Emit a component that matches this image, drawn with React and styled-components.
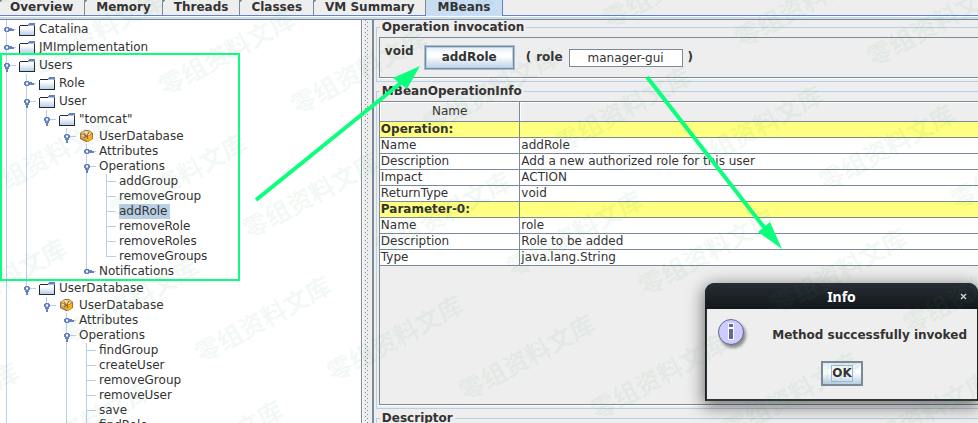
import React from "react";
import styled, { createGlobalStyle, css } from "styled-components";

const LINE = "#7a8a99";
const SOFT = "#b8cfe5";
const BLUE = "#6382bf";
const MARK = "#0bff7d";
const FACE = "#eeeeee";

const GlobalStyle = createGlobalStyle`
  * { box-sizing: border-box; }
  html, body, #root { height: 100%; }
  body {
    margin: 0;
    overflow: hidden;
    background: ${FACE};
    color: #333333;
    font-family: "DejaVu Sans", sans-serif;
    font-size: 12px;
    line-height: 15px;
  }
  button, input { font: inherit; color: inherit; }
`;

const Page = styled.div`
  position: relative;
  display: flex;
  flex-direction: column;
  height: 100vh;
  overflow: hidden;
`;

/* ---------- tab bar ---------- */
const TabBar = styled.nav`
  display: flex;
  flex: none;
  height: 16px;
  border-bottom: 1px solid ${BLUE};
`;

const Tab = styled.button`
  flex: none;
  height: ${({ $selected }) => ($selected ? 16 : 15)}px;
  padding: 0 11px ${({ $selected }) => ($selected ? 2 : 1)}px 10px;
  border: 0;
  border-right: 1px solid ${({ $selected }) => ($selected ? BLUE : LINE)};
  background: ${({ $selected }) =>
    $selected ? "#c8ddf2" : `linear-gradient(135deg, ${LINE} 0 2px, transparent 2px)`};
  font-weight: bold;
  line-height: 14px;
  white-space: nowrap;
  & + & { padding-left: 11px; }
`;

const TabEdge = styled.div`
  flex: none;
  height: 4px;
  border-top: 1px solid #ffffff;
  border-bottom: 1px solid ${LINE};
  background: #c8ddf2;
`;

const Split = styled.div`
  display: flex;
  flex: 1;
  min-height: 0;
`;

/* ---------- tree ---------- */
const TreePane = styled.aside`
  flex: none;
  width: 37%;
  border-right: 1px solid ${LINE};
  background: #ffffff;
  overflow: hidden;
`;

const Branch = styled.ul`
  list-style: none;
  margin: 0;
  padding: 0 0 0 ${({ $root }) => ($root ? 0 : 20)}px;
`;

const Node = styled.li`
  background: linear-gradient(${SOFT}, ${SOFT}) 6px 0 / 1px
    ${({ $last, $middle }) => ($last ? `${$middle}px` : "100%")} no-repeat;
`;

const Row = styled.div`
  display: grid;
  grid-template-columns: 19px auto;
  justify-content: start;
  height: ${({ $height }) => $height}px;
  background: linear-gradient(${SOFT}, ${SOFT}) 6px ${({ $middle }) => $middle}px / 10px 1px
    no-repeat;
  white-space: nowrap;
`;

const Label = styled.span`
  display: flex;
  align-items: center;
  grid-column: 2;
  gap: 4px;
  padding-right: 3px;
  ${({ $active }) => $active && css`background: ${SOFT};`}
`;

const HandleIcon = styled.svg`
  display: block;
`;

function Handle({ open, height, middle }) {
  return (
    <HandleIcon
      width="19"
      height={height}
      viewBox={`0 ${-middle} 19 ${height}`}
      shapeRendering="crispEdges"
      aria-hidden="true"
    >
      <path d="M5 -2h4v1h1v3h-1v1h-4v-1h-1v-3h1z" fill={BLUE} />
      <path d="M6 -1h2v3h-2z" fill="#b4c5e6" />
      <path d="M6 0h2v1h-2z" fill="#ffffff" />
      {open ? (
        <path d="M5 3h4v1h-1v3h-2v-3h-1z" fill={BLUE} />
      ) : (
        <path d="M10 -1h2v1h2v2h-4z" fill={BLUE} />
      )}
    </HandleIcon>
  );
}

function FolderIcon() {
  return (
    <svg width="16" height="16" viewBox="0 0 16 16" shapeRendering="crispEdges" aria-hidden="true">
      <defs>
        <linearGradient id="folder" x1="0" y1="0" x2="0" y2="1">
          <stop offset="0.2" stopColor="#ffffff" />
          <stop offset="1" stopColor="#b8cfe5" />
        </linearGradient>
      </defs>
      <path d="M1 5h14v9H1z" fill="url(#folder)" />
      <path d="M0 5h1v9h14v-9h1v10H0zM1 4h8v1H1z" fill="#1f2a36" />
      <path d="M10 2h6v3H9V3h1z" fill={BLUE} />
      <path d="M9 4h6v1H9z" fill="#a9bde0" />
    </svg>
  );
}

function BeanIcon() {
  return (
    <svg width="16" height="14" viewBox="0 0 16 14" aria-hidden="true">
      <path d="M1 4L6 1h4l4 3v6l-5 3H7l-6-3z" fill="#a8742c" />
      <path d="M2 4l4-2h4l3 2-5 3z" fill="#ecca86" />
      <path d="M2 5l6 3v4l-6-3z" fill="#d3a766" />
      <path d="M8 8l5-3v5l-5 3z" fill="#ffae16" />
      <path d="M5 4l2 3M10 3L8 7M5 9l3-2 1 3" fill="none" stroke="#7d5a2c" />
      <path d="M6 3l2 1M9 6l2-1M3 6l2 1" stroke="#fff4dc" />
    </svg>
  );
}

const leaf = (name, active) => ({ name, active });
const TREE = [
  { name: "Catalina", icon: "folder", handle: true },
  { name: "JMImplementation", icon: "folder", handle: true },
  {
    name: "Users",
    icon: "folder",
    handle: true,
    more: true,
    children: [
      { name: "Role", icon: "folder", handle: true },
      {
        name: "User",
        icon: "folder",
        handle: true,
        children: [
          {
            name: '"tomcat"',
            icon: "folder",
            handle: true,
            children: [
              {
                name: "UserDatabase",
                icon: "bean",
                handle: true,
                children: [
                  { name: "Attributes", handle: true },
                  {
                    name: "Operations",
                    handle: true,
                    children: [
                      leaf("addGroup"),
                      leaf("removeGroup"),
                      leaf("addRole", true),
                      leaf("removeRole"),
                      leaf("removeRoles"),
                      leaf("removeGroups"),
                    ],
                  },
                  { name: "Notifications", handle: true },
                ],
              },
            ],
          },
        ],
      },
      {
        name: "UserDatabase",
        icon: "folder",
        handle: true,
        children: [
          {
            name: "UserDatabase",
            icon: "bean",
            handle: true,
            children: [
              { name: "Attributes", handle: true },
              {
                name: "Operations",
                handle: true,
                more: true,
                children: [
                  leaf("findGroup"),
                  leaf("createUser"),
                  leaf("removeGroup"),
                  leaf("removeUser"),
                  leaf("save"),
                  leaf("findRole"),
                ],
              },
            ],
          },
        ],
      },
    ],
  },
];

const ROW_HEIGHT = { folder: 18, bean: 16 };

function Tree({ nodes, root }) {
  return (
    <Branch $root={root}>
      {nodes.map((node, i) => {
        const height = ROW_HEIGHT[node.icon] || 15;
        const middle = Math.floor(height / 2);
        return (
          <Node key={node.name} $last={i === nodes.length - 1 && !node.more} $middle={middle}>
            <Row $height={height} $middle={middle}>
              {node.handle && (
                <Handle open={Boolean(node.children)} height={height} middle={middle} />
              )}
              <Label $active={node.active}>
                {node.icon === "folder" && <FolderIcon />}
                {node.icon === "bean" && <BeanIcon />}
                {node.name}
              </Label>
            </Row>
            {node.children && <Tree nodes={node.children} />}
          </Node>
        );
      })}
    </Branch>
  );
}

/* ---------- right side ---------- */
const Divider = styled.div`
  display: flex;
  justify-content: center;
  flex: none;
  width: 12px;
  border-left: 1px solid #ffffff;
  border-right: 2px solid ${LINE};
`;

const Grip = styled.div`
  width: 4px;
  background:
    conic-gradient(from 270deg at 1px 1px, ${LINE} 90deg, transparent 0) 0 0 / 4px 4px,
    conic-gradient(from 270deg at 1px 1px, ${LINE} 90deg, transparent 0) 2px 2px / 4px 4px;
`;

const Details = styled.main`
  display: flex;
  flex: 1;
  flex-direction: column;
  min-width: 0;
  padding-left: 2px;
`;

const Group = styled.fieldset`
  flex: none;
  min-width: 0;
  margin: 0 0 2px;
  padding: 2px 0 3px 2px;
  border: 1px solid ${SOFT};
  border-right: 0;
`;

const Legend = styled.legend`
  margin-left: 1px;
  padding: 0 2px;
  font-weight: bold;
  line-height: 15px;
`;

const Inset = styled.div`
  min-height: ${({ $height }) => $height}px;
  border: 1px solid ${LINE};
  border-right: 0;
  box-shadow: 0 1px #ffffff;
`;

const Invocation = styled.form`
  display: flex;
  align-items: flex-start;
  padding: 6px 5px 5px;
  font-weight: bold;
`;

const Call = styled.div`
  display: flex;
  align-items: center;
  gap: 5px;
  margin: 1px 0 0 10px;
`;

const SwingButton = styled.button`
  padding: 0;
  border: 2px solid ${LINE};
  background: linear-gradient(#dde8f3, #ffffff 35%, #ffffff 45%, #b8cfe5);
  font-weight: bold;
`;

const InvokeButton = styled(SwingButton)`
  width: 91px;
  height: 25px;
  margin-right: 6px;
  border: 1px solid #a3bcd6;
  box-shadow: inset 0 0 0 1px ${LINE}, inset 0 0 0 2px ${SOFT};
`;

const ParamLabel = styled.label`
  display: flex;
  align-items: center;
  gap: 6px;
`;

const ParamInput = styled.input`
  width: 114px;
  height: 18px;
  padding: 0;
  border: 1px solid ${LINE};
  background: #ffffff;
  font-weight: normal;
  text-align: center;
`;

const InfoTable = styled.table`
  width: 100%;
  table-layout: fixed;
  border-collapse: collapse;
`;

const HeadCell = styled.th`
  width: ${({ $narrow }) => ($narrow ? "140px" : "auto")};
  height: 19px;
  padding: 0;
  border-bottom: 1px solid ${LINE};
  border-right: ${({ $narrow }) => ($narrow ? `1px solid ${LINE}` : 0)};
  box-shadow: inset 1px 1px #ffffff;
  font-weight: normal;
  text-align: center;
`;

const Cell = styled.td`
  height: 16px;
  padding: 0 1px;
  border-bottom: 1px solid ${LINE};
  background: ${({ $section }) => ($section ? "#ffff80" : "#ffffff")};
  font-weight: ${({ $section }) => ($section ? "bold" : "normal")};
  white-space: nowrap;
  line-height: 15px;
  &:first-child { border-right: 1px solid ${LINE}; }
`;

const ROWS = [
  ["Operation:", "", true],
  ["Name", "addRole"],
  ["Description", "Add a new authorized role for this user"],
  ["Impact", "ACTION"],
  ["ReturnType", "void"],
  ["Parameter-0:", "", true],
  ["Name", "role"],
  ["Description", "Role to be added"],
  ["Type", "java.lang.String"],
];

/* ---------- message dialog ---------- */
const Dialog = styled.section`
  position: absolute;
  top: 283px;
  right: 0;
  width: 273px;
  border-radius: 10px 10px 0 0;
  background: #1b2025;
  box-shadow: 0 4px 16px 2px rgba(0, 0, 0, 0.5);
`;

const DialogTitle = styled.header`
  display: grid;
  grid-template-columns: 30px 1fr 30px;
  align-items: center;
  height: 26px;
  border-radius: 9px 9px 0 0;
  background: linear-gradient(#262d34, #14181c);
  color: #ffffff;
  font-family: "Noto Sans", sans-serif;
  font-size: 14px;
  font-weight: bold;
  text-align: center;
`;

const TitleText = styled.span`
  grid-column: 2;
`;

const CloseButton = styled.button`
  padding: 0;
  border: 0;
  background: none;
  line-height: 0;
`;

const DialogBody = styled.div`
  display: flex;
  flex-direction: column;
  align-items: center;
  height: 92px;
  margin: 0 1px;
  padding: 8px 10px 0;
  border: 1px solid #2c343c;
  border-width: 0 0 2px 1px;
  background: ${FACE};
  font-weight: bold;
`;

const Message = styled.div`
  display: flex;
  align-items: center;
  justify-content: space-between;
  align-self: stretch;
  height: 36px;
  margin-bottom: 8px;
  white-space: nowrap;
`;

const OkButton = styled(SwingButton)`
  width: 42px;
  height: 25px;
`;

const OkFocus = styled.span`
  display: inline-block;
  border: 1px solid #a3b8cc;
  line-height: 15px;
`;

/* ---------- overlays ---------- */
const Overlay = styled.svg`
  position: absolute;
  top: 0;
  left: 0;
  pointer-events: none;
`;

const MarkText = styled.text`
  fill: #3c9650;
  fill-opacity: 0.08;
  font-family: "Noto Sans CJK SC", sans-serif;
  font-size: 25px;
  font-weight: 700;
  text-anchor: middle;
  dominant-baseline: central;
`;

const MARKS = [];
for (let j = -4; j <= 4; j += 1) {
  for (let i = -8; i <= 5; i += 1) {
    const x = 706 + i * 132 + j * 48;
    const y = 251 + i * 19 - j * 124;
    if (x > -70 && x < 1045 && y > -40 && y < 465) MARKS.push([x, y]);
  }
}

const TABS = ["Overview", "Memory", "Threads", "Classes", "VM Summary", "MBeans"];

export default function App() {
  return (
    <Page>
      <GlobalStyle />
      <TabBar>
        {TABS.map((name) => (
          <Tab key={name} type="button" $selected={name === "MBeans"}>
            {name}
          </Tab>
        ))}
      </TabBar>
      <TabEdge />
      <Split>
        <TreePane>
          <Tree nodes={TREE} root />
        </TreePane>
        <Divider>
          <Grip />
        </Divider>
        <Details>
          <Group>
            <Legend>Operation invocation</Legend>
            <Inset $height={41}>
              <Invocation>
                void
                <Call>
                  <InvokeButton type="button">addRole</InvokeButton>
                  <span>(</span>
                  <ParamLabel>
                    role
                    <ParamInput defaultValue="manager-gui" />
                  </ParamLabel>
                  <span>)</span>
                </Call>
              </Invocation>
            </Inset>
          </Group>
          <Group>
            <Legend>MBeanOperationInfo</Legend>
            <Inset $height={304}>
              <InfoTable>
                <thead>
                  <tr>
                    <HeadCell $narrow>Name</HeadCell>
                    <HeadCell />
                  </tr>
                </thead>
                <tbody>
                  {ROWS.map(([name, value, section], i) => (
                    <tr key={i}>
                      <Cell $section={section}>{name}</Cell>
                      <Cell $section={section}>{value}</Cell>
                    </tr>
                  ))}
                </tbody>
              </InfoTable>
            </Inset>
          </Group>
          <Group>
            <Legend>Descriptor</Legend>
            <Inset $height={40} />
          </Group>
        </Details>
      </Split>

      <Dialog role="dialog" aria-labelledby="dialog-title">
        <DialogTitle>
          <TitleText id="dialog-title">Info</TitleText>
          <CloseButton type="button" aria-label="Close">
            <svg width="7" height="7" viewBox="0 0 7 7">
              <path d="M1 1l5 5M6 1l-5 5" stroke="#d8dde2" strokeWidth="1.3" />
            </svg>
          </CloseButton>
        </DialogTitle>
        <DialogBody>
          <Message>
            <svg width="34" height="34" viewBox="0 0 34 34" aria-hidden="true">
              <defs>
                <filter id="soft" x="-20%" y="-20%" width="150%" height="150%">
                  <feGaussianBlur stdDeviation="1.5" />
                </filter>
              </defs>
              <circle cx="16" cy="17" r="13" fill="#8c8c8c" filter="url(#soft)" />
              <circle cx="14" cy="14" r="12.5" fill="#ccccff" stroke="#666699" />
              <path d="M11 5h6v5h-6zM11 10h6v12h-6z" fill="#ffffff" />
              <path d="M12 6h4v3h-4zM12 11h4v10h-4z" fill="#666699" />
            </svg>
            Method successfully invoked
          </Message>
          <OkButton type="button">
            <OkFocus>OK</OkFocus>
          </OkButton>
        </DialogBody>
      </Dialog>

      <Overlay width="978" height="423" viewBox="0 0 978 423" aria-hidden="true">
        {MARKS.map(([x, y]) => (
          <MarkText key={`${x},${y}`} transform={`translate(${x} ${y}) rotate(-28.5)`}>
            零组资料文库
          </MarkText>
        ))}
      </Overlay>
      <Overlay width="978" height="423" viewBox="0 0 978 423" aria-hidden="true">
        <rect x="1" y="54" width="238" height="226" fill="none" stroke={MARK} strokeWidth="2" />
        <path d="M256 200L402 82M647 77L767 231" stroke={MARK} strokeWidth="4" />
        <path d="M420 66L393 78L407 89zM782 249L758 232L770 222z" fill={MARK} />
      </Overlay>
    </Page>
  );
}
